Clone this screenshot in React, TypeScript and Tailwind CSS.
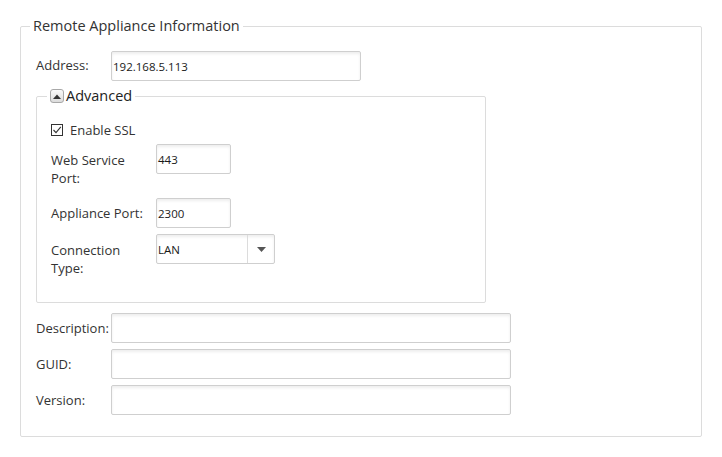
import React from "react";

function TextBox({ value, w }: { value?: string; w: string }) {
  return (
    <div
      className={`${w} h-[30px] border border-[#cfcfcf] rounded-[2px] bg-white shadow-[inset_0_2px_3px_rgba(0,0,0,0.07)] flex items-center pl-[1px] pt-[1px] text-[11.5px] text-[#1a1a1a]`}
    >
      {value}
    </div>
  );
}

export default function App() {
  return (
    <div className="w-[722px] h-[457px] bg-white pl-[20px] pt-[16px] font-['Open_Sans',sans-serif] text-[#333]">
      <fieldset className="w-[682px] border border-[#dcdcdc] rounded-[2px] p-0 m-0">
        <legend className="ml-[9px] px-[3px] text-[14.5px] leading-[20px] text-[#333]">
          Remote Appliance Information
        </legend>
        <div className="pl-[15px] pt-[14px] pb-[21px]">
          <div className="flex items-center h-[30px] pt-[2px]">
            <div className="w-[75px] text-[13px]">Address:</div>
            <TextBox w="w-[250px]" value="192.168.5.113" />
          </div>

          <fieldset className="mt-[6px] w-[450px] border border-[#dcdcdc] rounded-[2px] p-0 m-0">
            <legend className="ml-[10px] px-[3px] flex items-center text-[14.5px] leading-[20px] text-[#222]">
              <span className="w-[14px] h-[14px] rounded-[3px] border border-[#a8a8a8] bg-linear-to-b from-[#fafafa] to-[#dcdcdc] flex items-center justify-center mr-[2px]">
                <svg width="8" height="5" viewBox="0 0 8 5">
                  <path d="M0 5 L4 0.5 L8 5 Z" fill="#333" />
                </svg>
              </span>
              Advanced
            </legend>
            <div className="pl-[14px] pt-[15px] pb-[25px]">
              <div className="flex items-center h-[18px]">
                <span className="w-[12px] h-[12px] border border-[#333] bg-white flex items-center justify-center">
                  <svg width="10" height="10" viewBox="0 0 10 10">
                    <path d="M1.5 5 L4 7.6 L8.8 1.8" fill="none" stroke="#333" strokeWidth="1.1" />
                  </svg>
                </span>
                <span className="ml-[7px] text-[13px] pt-[1px]">Enable SSL</span>
              </div>

              <div className="mt-[5px] flex items-start">
                <div className="w-[105px] pt-[7px] text-[13px] leading-[18px]">
                  Web Service
                  <br />
                  Port:
                </div>
                <TextBox w="w-[75px]" value="443" />
              </div>

              <div className="mt-[11px] flex items-start">
                <div className="w-[105px] pt-[6px] text-[13px] leading-[18px]">Appliance Port:</div>
                <TextBox w="w-[75px]" value="2300" />
              </div>

              <div className="mt-[6px] flex items-start">
                <div className="w-[105px] pt-[7px] text-[13px] leading-[18px]">
                  Connection
                  <br />
                  Type:
                </div>
                <div className="w-[119px] h-[30px] border border-[#cfcfcf] rounded-[2px] bg-white shadow-[inset_0_2px_3px_rgba(0,0,0,0.07)] flex">
                  <div className="flex-1 flex items-center pl-[1px] pt-[1px] text-[11.5px] text-[#1a1a1a]">LAN</div>
                  <div className="w-[27px] border-l border-[#dcdcdc] flex items-center justify-center">
                    <svg width="9" height="5" viewBox="0 0 9 5">
                      <path d="M0 0 L9 0 L4.5 5 Z" fill="#555" />
                    </svg>
                  </div>
                </div>
              </div>
            </div>
          </fieldset>

          <div className="mt-[10px] flex items-center h-[30px]">
            <div className="w-[75px] text-[13px] whitespace-nowrap pt-[2px]">Description:</div>
            <TextBox w="w-[400px]" />
          </div>
          <div className="mt-[6px] flex items-center h-[30px]">
            <div className="w-[75px] text-[13px] pt-[2px]">GUID:</div>
            <TextBox w="w-[400px]" />
          </div>
          <div className="mt-[6px] flex items-center h-[30px]">
            <div className="w-[75px] text-[13px] pt-[2px]">Version:</div>
            <TextBox w="w-[400px]" />
          </div>
        </div>
      </fieldset>
    </div>
  );
}
